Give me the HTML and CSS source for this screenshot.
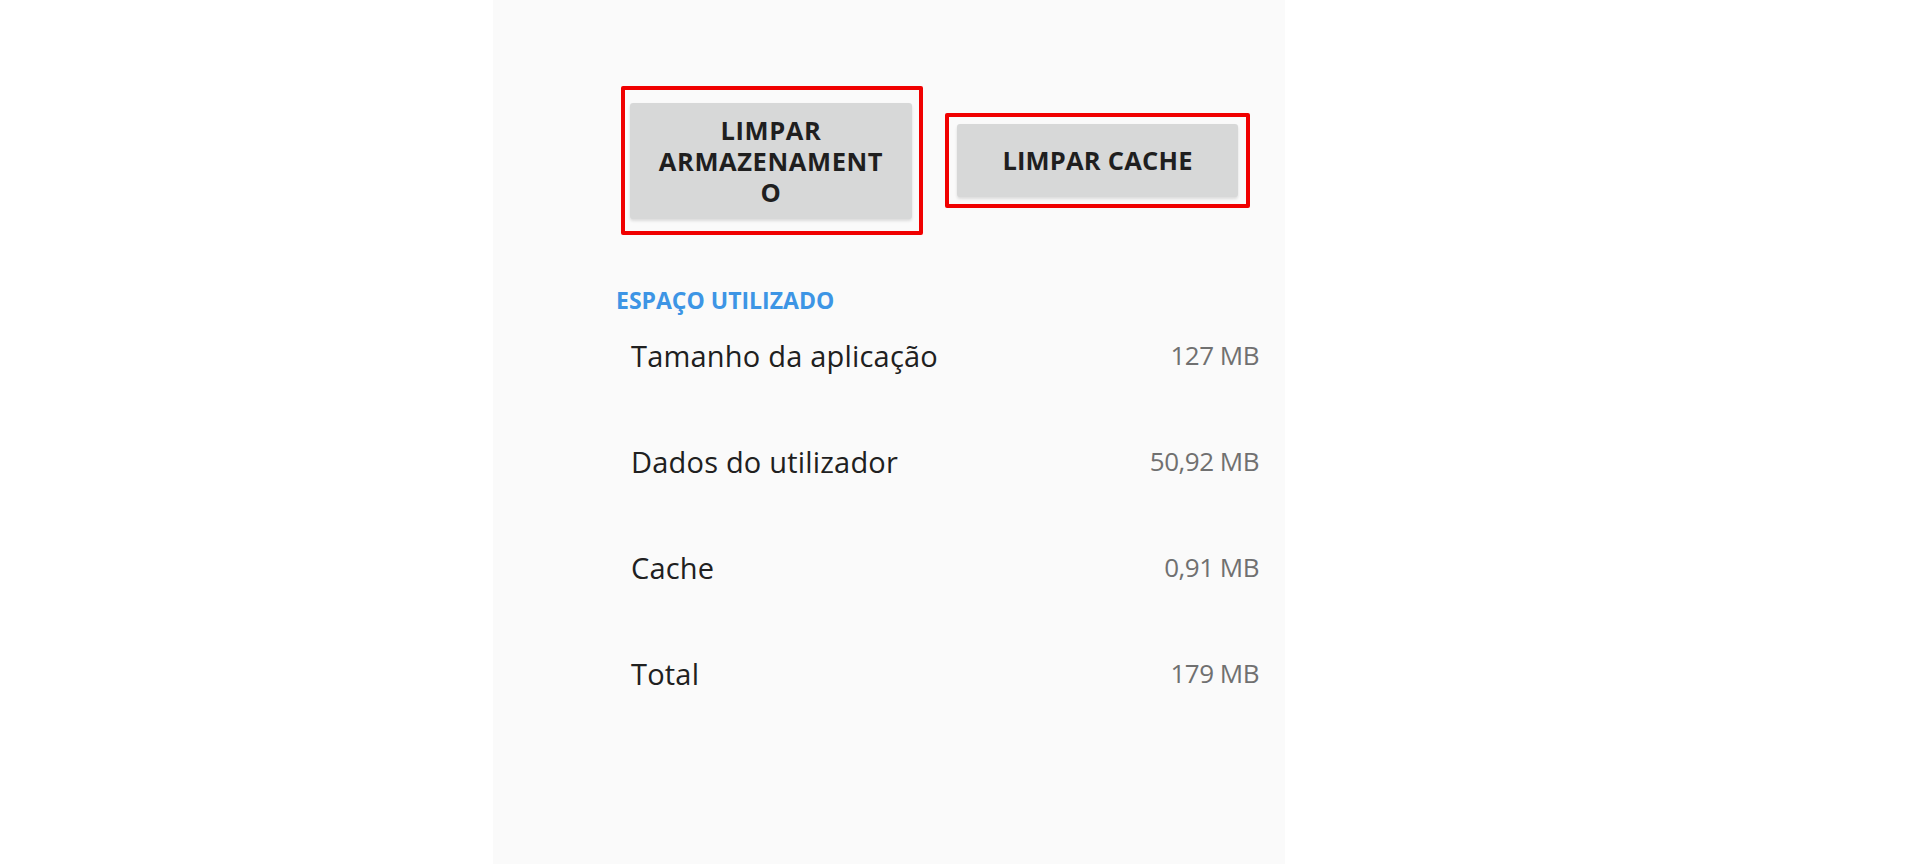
FILE: index.html
```html
<!DOCTYPE html>
<html lang="pt">
<head>
<meta charset="utf-8">
<title>Armazenamento</title>
<link rel="stylesheet" href="styles.css">
</head>
<body>
<main class="panel">
  <div class="actions">
    <div class="highlight hl-storage">
      <button class="btn btn-storage">LIMPAR<br>ARMAZENAMENT<br>O</button>
    </div>
    <div class="highlight hl-cache">
      <button class="btn btn-cache">LIMPAR CACHE</button>
    </div>
  </div>
  <section class="usage">
    <h2 class="section-title">ESPAÇO UTILIZADO</h2>
    <ul class="rows">
      <li class="row"><span class="label">Tamanho da aplicação</span><span class="value">127 MB</span></li>
      <li class="row"><span class="label">Dados do utilizador</span><span class="value">50,92 MB</span></li>
      <li class="row"><span class="label">Cache</span><span class="value">0,91 MB</span></li>
      <li class="row"><span class="label">Total</span><span class="value">179 MB</span></li>
    </ul>
  </section>
</main>
</body>
</html>
```

FILE: styles.css
```css
html, body {
  margin: 0;
  padding: 0;
  background: #ffffff;
  height: 100%;
}

body {
  font-family: "Open Sans", "Noto Sans", sans-serif;
  overflow: hidden;
}

.panel {
  margin-left: 493px;
  width: 792px;
  height: 864px;
  background: #fafafa;
  box-sizing: border-box;
  padding-top: 86px;
}

.actions {
  display: flex;
  align-items: center;
  gap: 22px;
  padding-left: 128px;
}

.highlight {
  border: 4px solid #f00000;
  border-radius: 2px;
  box-sizing: border-box;
  display: flex;
}

.hl-storage {
  width: 302px;
  height: 149px;
  padding: 13px 7px 12px 5px;
}

.hl-cache {
  width: 305px;
  height: 95px;
  padding: 7px 8px;
}

.btn {
  flex: 1;
  border: none;
  border-radius: 3px;
  background: #d7d8d8;
  box-shadow: 0 2px 3px rgba(0, 0, 0, 0.12);
  color: #1f1f1f;
  font-family: "Open Sans", "Noto Sans", sans-serif;
  font-weight: 700;
  font-size: 25.5px;
  line-height: 31px;
  letter-spacing: 0.6px;
  text-align: center;
  padding: 0;
}

.btn-cache {
  letter-spacing: 0.2px;
}

.usage {
  margin-top: 50px;
}

.section-title {
  margin: 0 0 0 123px;
  font-size: 23px;
  font-weight: 700;
  line-height: 30px;
  color: #3d95e5;
  letter-spacing: 0;
}

.rows {
  list-style: none;
  margin: 0;
  padding: 0 26px 0 138px;
}

.row {
  display: flex;
  justify-content: space-between;
  align-items: center;
  height: 106px;
}

.row:first-child {
  margin-top: -13px;
}

.label {
  font-size: 29px;
  color: #202020;
  letter-spacing: 0.2px;
}

.value {
  font-size: 26px;
  color: #707070;
  letter-spacing: -0.5px;
}
```
